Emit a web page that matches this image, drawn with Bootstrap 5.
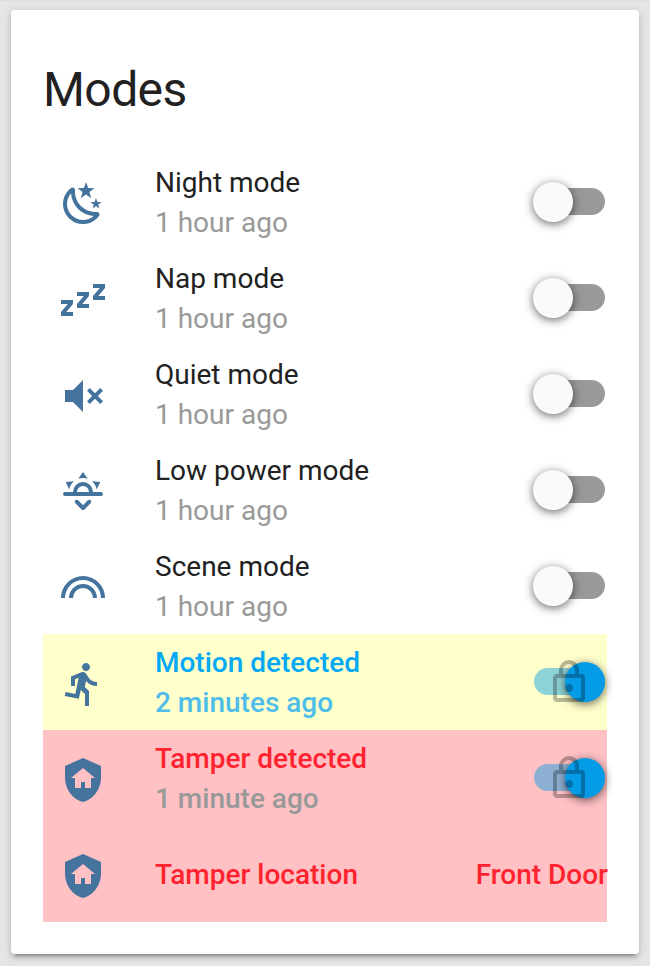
<!DOCTYPE html>
<html lang="en">
<head>
<meta charset="utf-8">
<meta name="viewport" content="width=device-width, initial-scale=1">
<title>Modes</title>
<link href="https://cdn.jsdelivr.net/npm/bootstrap@5.3.0/dist/css/bootstrap.min.css" rel="stylesheet">
<style>
body{background:#e5e5e5;font-family:Roboto,"Noto Sans",sans-serif;color:#212121;height:966px;overflow:hidden;padding:10px 11px 12px;box-shadow:inset 0 1px 1px rgba(0,0,0,.03)}
.panel{height:944px;border-radius:4px;padding:32px;box-shadow:0 4px 4px rgba(0,0,0,.14),0 2px 10px rgba(0,0,0,.12),0 6px 2px -4px rgba(0,0,0,.2)}
.title{font-size:48px;line-height:96px;height:112px;letter-spacing:-.576px;font-weight:400}
.entity{height:96px;font-size:28px;line-height:40px}
.label{padding-top:2px}
.location{margin-right:-1px}
.icon-cell{width:80px;margin-right:32px;padding-top:4px}
.glyph{width:48px;height:48px;fill:#44739e;display:block}
.sub{color:#999}
.motion{background:#ffffcc;color:#03a9f4;font-weight:500}
.motion .sub{color:#4fbdea}
.alarm{background:#ffc1c4;color:#ff232f;font-weight:500}
.switch{width:72px;height:40px;margin-right:2px}
.track{left:1px;top:6px;width:71px;height:27px;border-radius:14px;background:#999}
.knob{left:0;top:0;width:40px;height:40px;background:#fafafa;box-shadow:0 2px 10px rgba(0,0,0,.6)}
.on .track{background:rgba(3,155,229,.45)}
.on .knob{left:32px;background:#039be5}
.lock{left:12px;top:-4px;width:48px;height:48px;fill:#000;opacity:.27}
</style>
<script src="https://cdn.jsdelivr.net/npm/bootstrap@5.3.0/dist/js/bootstrap.bundle.min.js"></script>
</head>
<body>
<svg class="d-none">
<symbol id="shield" viewBox="0 0 24 24"><path d="M11,13H13V16H16V11H18L12,6L6,11H8V16H11V13M12,1L21,5V11C21,16.55 17.16,21.74 12,23C6.84,21.74 3,16.55 3,11V5L12,1Z"/></symbol>
<symbol id="lock" viewBox="0 0 24 24"><path d="M12,17C10.89,17 10,16.1 10,15C10,13.89 10.89,13 12,13A2,2 0 0,1 14,15A2,2 0 0,1 12,17M18,20V10H6V20H18M18,8A2,2 0 0,1 20,10V20A2,2 0 0,1 18,22H6C4.89,22 4,21.1 4,20V10C4,8.89 4.89,8 6,8H7V6A5,5 0 0,1 12,1A5,5 0 0,1 17,6V8H18M12,3A3,3 0 0,0 9,6V8H15V6A3,3 0 0,0 12,3Z"/></symbol>
</svg>
<main class="panel bg-white">
<h1 class="title m-0">Modes</h1>
<div class="entity d-flex align-items-center">
<div class="icon-cell d-flex justify-content-center"><svg class="glyph" viewBox="0 0 24 24"><path d="M17.75,4.09L15.22,6.03L16.13,9.09L13.5,7.28L10.87,9.09L11.78,6.03L9.25,4.09L12.44,4L13.5,1L14.56,4L17.75,4.09M21.25,11L19.61,12.25L20.2,14.23L18.5,13.06L16.8,14.23L17.39,12.25L15.75,11L17.81,10.95L18.5,9L19.19,10.95L21.25,11M18.97,15.95C19.8,15.87 20.69,17.05 20.16,17.8C19.84,18.25 19.5,18.67 19.08,19.07C15.17,23 8.84,23 4.94,19.07C1.03,15.17 1.03,8.83 4.94,4.93C5.34,4.53 5.76,4.17 6.21,3.85C6.96,3.32 8.14,4.21 8.06,5.04C7.79,7.9 8.75,10.87 10.95,13.06C13.14,15.26 16.1,16.22 18.97,15.95M17.33,17.97C14.5,17.81 11.7,16.64 9.53,14.5C7.36,12.31 6.2,9.5 6.04,6.68C3.23,9.82 3.34,14.64 6.35,17.66C9.37,20.67 14.19,20.78 17.33,17.97Z"/></svg></div>
<div class="label flex-grow-1"><div>Night mode</div><div class="sub">1 hour ago</div></div>
<div class="switch position-relative"><div class="track position-absolute"></div><div class="knob position-absolute rounded-circle"></div></div>
</div>
<div class="entity d-flex align-items-center">
<div class="icon-cell d-flex justify-content-center"><svg class="glyph" viewBox="0 0 24 24"><path d="M23,12H17V10L20.39,6H17V4H23V6L19.62,10H23V12M15,16H9V14L12.39,10H9V8H15V10L11.62,14H15V16M7,20H1V18L4.39,14H1V12H7V14L3.62,18H7V20Z"/></svg></div>
<div class="label flex-grow-1"><div>Nap mode</div><div class="sub">1 hour ago</div></div>
<div class="switch position-relative"><div class="track position-absolute"></div><div class="knob position-absolute rounded-circle"></div></div>
</div>
<div class="entity d-flex align-items-center">
<div class="icon-cell d-flex justify-content-center"><svg class="glyph" viewBox="0 0 24 24"><path d="M3,9H7L12,4V20L7,15H3V9M16.59,12L14,9.41L15.41,8L18,10.59L20.59,8L22,9.41L19.41,12L22,14.59L20.59,16L18,13.41L15.41,16L14,14.59L16.59,12Z"/></svg></div>
<div class="label flex-grow-1"><div>Quiet mode</div><div class="sub">1 hour ago</div></div>
<div class="switch position-relative"><div class="track position-absolute"></div><div class="knob position-absolute rounded-circle"></div></div>
</div>
<div class="entity d-flex align-items-center">
<div class="icon-cell d-flex justify-content-center"><svg class="glyph" viewBox="0 0 24 24"><path d="M3,12H7A5,5 0 0,1 12,7A5,5 0 0,1 17,12H21A1,1 0 0,1 22,13A1,1 0 0,1 21,14H3A1,1 0 0,1 2,13A1,1 0 0,1 3,12M15,12A3,3 0 0,0 12,9A3,3 0 0,0 9,12H15M12,2L14.39,5.42C13.65,5.15 12.84,5 12,5C11.16,5 10.35,5.15 9.61,5.42L12,2M3.34,7L7.5,6.65C6.9,7.16 6.36,7.78 5.94,8.5C5.5,9.24 5.25,10 5.11,10.79L3.34,7M20.65,7L18.88,10.79C18.74,10 18.47,9.23 18.05,8.5C17.63,7.78 17.1,7.15 16.5,6.64L20.65,7M12.71,20.71L15.82,17.6C16.21,17.21 16.21,16.57 15.82,16.18C15.43,15.79 14.8,15.79 14.41,16.18L12,18.59L9.59,16.18C9.2,15.79 8.57,15.79 8.18,16.18C7.79,16.57 7.79,17.21 8.18,17.6L11.29,20.71C11.5,20.9 11.74,21 12,21C12.26,21 12.5,20.9 12.71,20.71Z"/></svg></div>
<div class="label flex-grow-1"><div>Low power mode</div><div class="sub">1 hour ago</div></div>
<div class="switch position-relative"><div class="track position-absolute"></div><div class="knob position-absolute rounded-circle"></div></div>
</div>
<div class="entity d-flex align-items-center">
<div class="icon-cell d-flex justify-content-center"><svg class="glyph" viewBox="0 0 24 24"><path d="M12,6A11,11 0 0,0 1,17H3C3,12.04 7.04,8 12,8C16.96,8 21,12.04 21,17H23A11,11 0 0,0 12,6M12,10C8.14,10 5,13.14 5,17H7A5,5 0 0,1 12,12A5,5 0 0,1 17,17H19C19,13.14 15.86,10 12,10Z"/></svg></div>
<div class="label flex-grow-1"><div>Scene mode</div><div class="sub">1 hour ago</div></div>
<div class="switch position-relative"><div class="track position-absolute"></div><div class="knob position-absolute rounded-circle"></div></div>
</div>
<div class="entity motion d-flex align-items-center">
<div class="icon-cell d-flex justify-content-center"><svg class="glyph" viewBox="0 0 24 24"><path d="M13.5,5.5C14.59,5.5 15.5,4.58 15.5,3.5C15.5,2.38 14.59,1.5 13.5,1.5C12.39,1.5 11.5,2.38 11.5,3.5C11.5,4.58 12.39,5.5 13.5,5.5M9.89,19.38L10.89,15L13,17V23H15V15.5L12.89,13.5L13.5,10.5C14.79,12 16.79,13 19,13V11C17.09,11 15.5,10 14.69,8.58L13.69,7C13.29,6.38 12.69,6 12,6C11.69,6 11.5,6.08 11.19,6.08L6,8.28V13H8V9.58L9.79,8.88L8.19,17L3.29,16L2.89,18L9.89,19.38Z"/></svg></div>
<div class="label flex-grow-1"><div>Motion detected</div><div class="sub">2 minutes ago</div></div>
<div class="switch on position-relative"><div class="track position-absolute"></div><div class="knob position-absolute rounded-circle"></div><svg class="lock position-absolute"><use href="#lock"/></svg></div>
</div>
<div class="entity alarm d-flex align-items-center">
<div class="icon-cell d-flex justify-content-center"><svg class="glyph"><use href="#shield"/></svg></div>
<div class="label flex-grow-1"><div>Tamper detected</div><div class="sub">1 minute ago</div></div>
<div class="switch on position-relative"><div class="track position-absolute"></div><div class="knob position-absolute rounded-circle"></div><svg class="lock position-absolute"><use href="#lock"/></svg></div>
</div>
<div class="entity alarm d-flex align-items-center">
<div class="icon-cell d-flex justify-content-center"><svg class="glyph"><use href="#shield"/></svg></div>
<div class="label flex-grow-1">Tamper location</div>
<div class="label location">Front Door</div>
</div>
</main>
</body>
</html>
